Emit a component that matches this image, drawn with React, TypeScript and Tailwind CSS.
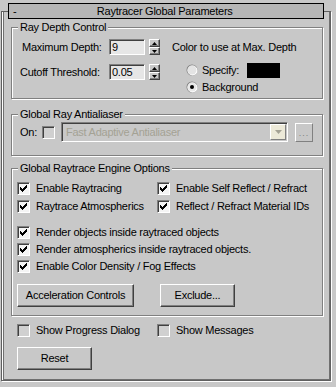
import React from "react";

const sunken =
  "border border-t-[#808080] border-l-[#808080] border-b-white border-r-white shadow-[inset_1px_1px_0_#404040]";
const raised =
  "border border-t-white border-l-white border-b-[#404040] border-r-[#404040] shadow-[inset_-1px_-1px_0_#808080]";

function CheckMark() {
  return (
    <svg width="7" height="7" viewBox="0 0 7 7" shapeRendering="crispEdges">
      <path
        d="M6 0h1v3h-1v1h-1v1h-1v1h-1v1h-1v-1h-1v-1h-1v-3h1v1h1v1h1v-1h1v-1h1z"
        fill="#000"
      />
    </svg>
  );
}

function Check({ checked, fill = "bg-[#f4f4f4]" }: { checked?: boolean; fill?: string }) {
  return (
    <span className={`flex h-[13px] w-[13px] shrink-0 items-center justify-center ${sunken} ${fill}`}>
      {checked && <CheckMark />}
    </span>
  );
}

function CheckRow({ label, checked = true, w }: { label: string; checked?: boolean; w?: string }) {
  return (
    <div className={`flex h-[17px] items-center gap-[6px] ${w ?? ""}`}>
      <Check checked={checked} fill={checked ? "bg-[#f4f4f4]" : "bg-[#d0d0d0]"} />
      <span>{label}</span>
    </div>
  );
}

function Radio({ on }: { on?: boolean }) {
  return (
    <svg width="12" height="12" viewBox="0 0 12 12">
      <circle cx="6" cy="6" r="5.5" fill="#808080" />
      <circle cx="6.5" cy="6.5" r="5" fill="#fff" />
      <circle cx="6" cy="6" r="4.5" fill={on ? "#e8e8e8" : "#e4e4e4"} />
      {on && <circle cx="6" cy="6" r="2" fill="#000" />}
    </svg>
  );
}

function Spinner() {
  return (
    <div className="ml-[4px] flex h-[16px] w-[11px] flex-col">
      <div className={`flex h-[8px] items-center justify-center bg-[#c8c8c8] ${raised}`}>
        <svg width="5" height="3" viewBox="0 0 5 3">
          <path d="M2.5 0L5 3H0z" fill="#000" />
        </svg>
      </div>
      <div className={`flex h-[8px] items-center justify-center bg-[#c8c8c8] ${raised}`}>
        <svg width="5" height="3" viewBox="0 0 5 3">
          <path d="M0 0h5L2.5 3z" fill="#000" />
        </svg>
      </div>
    </div>
  );
}

function Button({ label, w }: { label: string; w: string }) {
  return (
    <button className={`flex h-[23px] items-center justify-center bg-[#c8c8c8] ${raised} ${w}`}>
      {label}
    </button>
  );
}

function Group({ title, className, children }: { title: string; className?: string; children: React.ReactNode }) {
  return (
    <fieldset
      className={`ml-[9px] mr-[7px] border border-[#808080] shadow-[inset_1px_1px_0_#fff,1px_1px_0_#fff] ${className ?? ""}`}
    >
      <legend className="ml-[6px] bg-[#c8c8c8] px-[2px] leading-[13px]">{title}</legend>
      {children}
    </fieldset>
  );
}

export default function App() {
  return (
    <div className="h-[387px] w-[336px] overflow-hidden bg-[#c8c8c8] pt-[3px] font-['Liberation_Sans',Arial,sans-serif] text-[11px] leading-[13px] tracking-[-0.25px] text-black">
      {/* rollout title bar */}
      <div className="relative z-10 ml-[8px] flex h-[16px] w-[316px] items-center border border-black bg-[#b6b6b6]">
        <span className="pl-[4px]">-</span>
        <span className="flex-1 pr-[10px] text-center">Raytracer Global Parameters</span>
      </div>

      <div className="ml-[1px] mt-[-8px] h-[370px] w-[330px] border border-[#606060] shadow-[inset_1px_0_0_#fff,inset_2px_0_0_#707070,inset_-1px_-1px_0_#707070,1px_1px_0_#fff]">
        {/* Ray Depth Control */}
        <Group title="Ray Depth Control" className="mt-[9px] h-[78px]">
          <div className="flex pl-[8px] pt-[5px]">
            <div className="flex flex-col gap-[9px]">
              <div className="flex items-center">
                <span className="w-[89px] pl-[2px]">Maximum Depth:</span>
                <div className={`flex h-[16px] w-[36px] items-center bg-[#e6e6e6] pl-[2px] ${sunken}`}>9</div>
                <Spinner />
              </div>
              <div className="flex items-center">
                <span className="w-[89px]">Cutoff Threshold:</span>
                <div className={`flex h-[16px] w-[36px] items-center bg-[#e6e6e6] pl-[2px] ${sunken}`}>0.05</div>
                <Spinner />
              </div>
            </div>
            <div className="ml-[12px] flex flex-col">
              <div className="flex h-[16px] items-center">Color to use at Max. Depth</div>
              <div className="ml-[14px] mt-[7px] flex h-[16px] items-center">
                <Radio />
                <span className="ml-[4px] w-[45px]">Specify:</span>
                <span className="h-[15px] w-[33px] bg-black" />
              </div>
              <div className="ml-[14px] mt-[1px] flex h-[16px] items-center">
                <Radio on />
                <span className="ml-[4px]">Background</span>
              </div>
            </div>
          </div>
        </Group>

        {/* Global Ray Antialiaser */}
        <Group title="Global Ray Antialiaser" className="mt-[9px] h-[48px]">
          <div className="flex items-center pl-[8px] pt-[1px]">
            <span className="w-[22px]">On:</span>
            <Check fill="bg-[#d0d0d0]" />
            <div className={`ml-[6px] flex h-[20px] w-[227px] items-center justify-between bg-[#c8c8c8] ${sunken}`}>
              <span className="pl-[4px] text-[#a4a294]">Fast Adaptive Antialiaser</span>
              <span className="mr-[1px] flex h-[16px] w-[16px] items-center justify-center border border-t-white border-l-white border-b-[#808080] border-r-[#808080] bg-[#ece9d8]">
                <svg width="7" height="4" viewBox="0 0 7 4">
                  <path d="M0 0h7L3.5 4z" fill="#a4a294" />
                </svg>
              </span>
            </div>
            <div className="ml-[7px] flex h-[19px] w-[18px] items-end justify-center border border-t-white border-l-white border-b-[#808080] border-r-[#808080] bg-[#c8c8c8] pb-[5px] text-[#808080]">
              <span className="text-[9px] leading-[5px] tracking-[1px]">...</span>
            </div>
          </div>
        </Group>

        {/* Global Raytrace Engine Options */}
        <Group title="Global Raytrace Engine Options" className="mt-[6px] h-[154px]">
          <div className="flex flex-col pl-[5px] pt-[5px]">
            <div className="flex">
              <CheckRow label="Enable Raytracing" w="w-[140px]" />
              <CheckRow label="Enable Self Reflect / Refract" />
            </div>
            <div className="mt-[1px] flex">
              <CheckRow label="Raytrace Atmospherics" w="w-[140px]" />
              <CheckRow label="Reflect / Refract Material IDs" />
            </div>
            <div className="mt-[9px]">
              <CheckRow label="Render objects inside raytraced objects" />
            </div>
            <CheckRow label="Render atmospherics inside raytraced objects." />
            <CheckRow label="Enable Color Density / Fog Effects" />
            <div className="mt-[9px] flex gap-[26px]">
              <Button label="Acceleration Controls" w="w-[117px]" />
              <Button label="Exclude..." w="w-[75px]" />
            </div>
          </div>
        </Group>

        <div className="mt-[6px] flex pl-[15px]">
          <CheckRow label="Show Progress Dialog" checked={false} w="w-[140px]" />
          <CheckRow label="Show Messages" checked={false} />
        </div>
        <div className="mt-[8px] pl-[15px]">
          <Button label="Reset" w="w-[75px]" />
        </div>
      </div>
    </div>
  );
}
